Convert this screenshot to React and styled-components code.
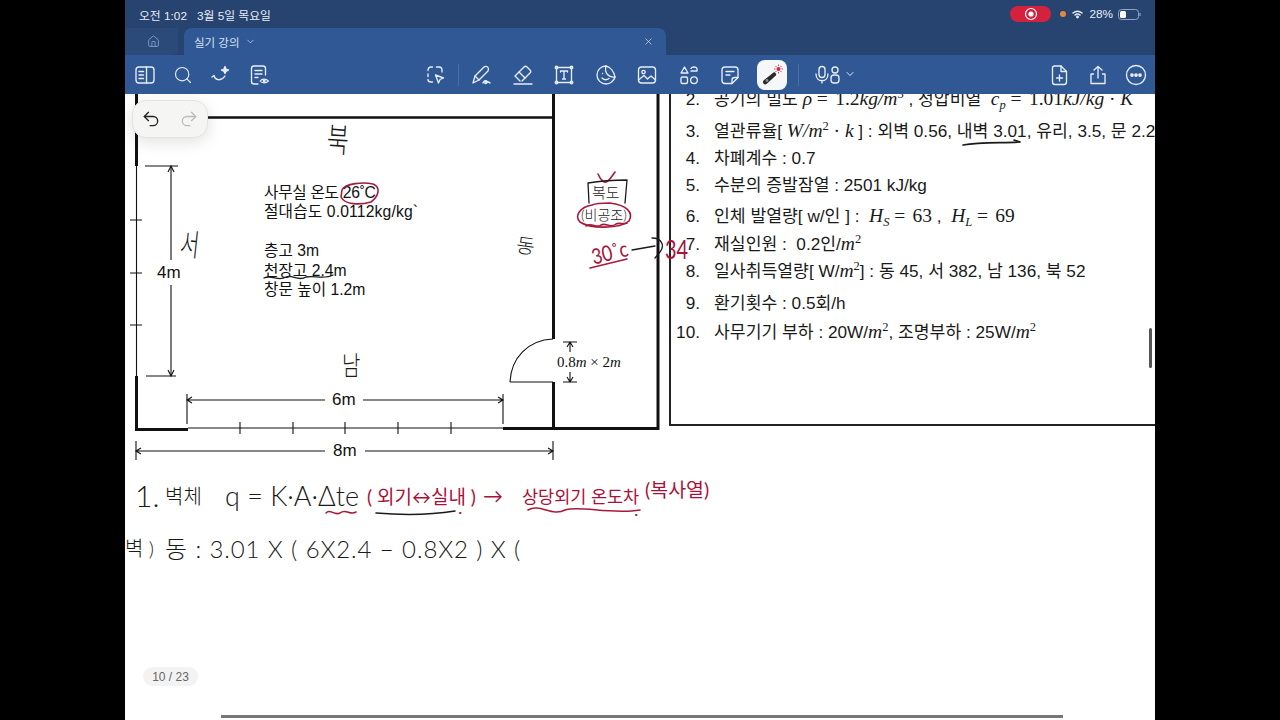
import React from "react";
import styled, { createGlobalStyle } from "styled-components";
import {
  ChevronDown,
  Home,
  Redo2,
  Search,
  Undo2,
  X,
} from "lucide-react";

const GlobalStyle = createGlobalStyle`
  html, body { margin: 0; padding: 0; background: #000; }
  body {
    font-family: "Liberation Sans", "Noto Sans CJK KR", sans-serif;
    color: #111;
  }
`;

// the recording is letterboxed: 125px black on both sides
const Stage = styled.div`
  width: 1280px;
  height: 720px;
  background: #000;
  display: flex;
  justify-content: center;
  overflow: hidden;
`;

const Screen = styled.div`
  width: 1030px;
  height: 720px;
  display: flex;
  flex-direction: column;
  position: relative;
  overflow: hidden;
  background: #fff;
`;

const StatusBar = styled.div`
  height: 28px;
  background: #27436f;
  color: #e8edf5;
  font-size: 11.8px;
  display: flex;
  align-items: center;
  justify-content: space-between;
  padding: 0 14px;
  box-sizing: border-box;
`;

const StatusLeft = styled.div`
  display: flex;
  gap: 10px;
`;

const StatusRight = styled.div`
  display: flex;
  align-items: center;
  gap: 5px;
`;

const RecordPill = styled.div`
  width: 41px;
  height: 16px;
  border-radius: 8px;
  background: #d4213d;
  display: flex;
  align-items: center;
  justify-content: center;
  margin-right: 4px;
`;

const OrangeDot = styled.span`
  width: 6px;
  height: 6px;
  border-radius: 50%;
  background: #e8873a;
`;

const TabBar = styled.div`
  height: 27px;
  background: #27436f;
  display: flex;
`;

const HomeTab = styled.div`
  width: 53px;
  height: 27px;
  background: #2b4a7a;
  border-bottom-right-radius: 6px;
  display: flex;
  align-items: center;
  justify-content: center;
  color: #8fa6c8;
  padding-left: 4px;
  box-sizing: border-box;
`;

const ActiveTab = styled.div`
  width: 482px;
  margin-left: 6px;
  background: #2f5895;
  border-radius: 8px 8px 0 0;
  display: flex;
  align-items: center;
  justify-content: space-between;
  padding: 0 12px 0 10px;
  box-sizing: border-box;
  color: #d5e0f0;
  font-size: 11.5px;
`;

const TabTitle = styled.div`
  display: flex;
  align-items: center;
  gap: 5px;
`;

const Toolbar = styled.div`
  height: 39px;
  background: #2f5895;
  color: #e6edf7;
  display: grid;
  grid-template-columns: 1fr auto 1fr;
  align-items: center;
  padding: 0 7px 0 8px;
  box-sizing: border-box;
`;

const ToolGroup = styled.div`
  display: flex;
  align-items: center;
  gap: ${(p) => p.$gap || 14}px;
  justify-content: ${(p) => p.$end ? "flex-end" : "flex-start"};
`;

const ToolIcon = styled.div`
  width: ${(p) => p.$w || 24}px;
  height: 30px;
  display: flex;
  align-items: center;
  justify-content: ${(p) => (p.$start ? "flex-start" : "center")};
  border-radius: 8px;
  background: ${(p) => (p.$active ? "#f6f7f9" : "transparent")};
  margin: ${(p) => (p.$active ? "0 -3px" : "0")};
`;

const ToolDivider = styled.div`
  width: 1px;
  height: 22px;
  background: #4a6fa6;
  margin: 0 -${(p) => p.$pull}px;
`;

const Page = styled.div`
  flex: 1;
  position: relative;
  overflow: hidden;
  background: #fff;
`;

const Sheet = styled.div`
  display: flex;
  height: 337px;
`;

const PlanFigure = styled.div`
  width: 544px;
  height: 337px;
  flex: none;
  position: relative;
`;

const PlanDrawing = styled.svg`
  display: block;
  width: 544px;
  height: 337px;
  overflow: visible;
`;

// labels on the floor plan, placed in screen coordinates
const PlanLabel = styled.span`
  position: absolute;
  left: ${(p) => p.$x - 125}px;
  top: ${(p) => p.$y - 94}px;
  font-size: ${(p) => p.$size || 15.7}px;
  line-height: 1;
  white-space: nowrap;
  font-family: ${(p) => p.$serif ? '"Liberation Serif", serif' : 'inherit'};
  letter-spacing: ${(p) => p.$track || 0}px;
`;

const ConditionPanel = styled.div`
  flex: 1;
  height: 332px;
  border-left: 2px solid #222;
  border-bottom: 2px solid #222;
  overflow: hidden;
  box-sizing: border-box;
  margin-right: -2px;
`;

const ConditionList = styled.ol`
  list-style: none;
  margin: -5px 0 0;
  padding: 0;
`;

const ConditionRow = styled.li`
  display: flex;
  height: 20px;
  line-height: 20px;
  font-size: 17.2px;
  white-space: nowrap;
  color: #1a1a1a;
  margin-top: ${(p) => p.$top || 0}px;
`;

const RowNumber = styled.span`
  width: 29px;
  text-align: right;
  flex: none;
  margin-right: 14px;
`;

const RowText = styled.span`
  display: block;
`;

const Math = styled.span`
  font-family: "Liberation Serif", serif;
  font-style: ${(p) => (p.$plain ? "normal" : "italic")};
  font-size: 19.5px;
  word-spacing: 2.5px;
`;

const Sup = styled.sup`
  font-size: 12.5px;
  line-height: 0;
  font-family: "Liberation Serif", serif;
`;

const Sub = styled.sub`
  font-size: 12.5px;
  line-height: 0;
  font-family: "Liberation Serif", serif;
  font-style: italic;
`;

const HandRow = styled.div`
  display: flex;
  align-items: center;
  height: 40px;
  margin-top: ${(p) => p.$top}px;
  padding-left: ${(p) => p.$left || 0}px;
`;

const Hand = styled.span`
  flex: 0 0 ${(p) => p.$w}px;
  white-space: nowrap;
  font-family: "Lato", "Noto Sans CJK KR", sans-serif;
  font-weight: ${(p) => (p.$red ? 400 : 300)};
  font-size: ${(p) => p.$size || 27}px;
  letter-spacing: ${(p) => p.$track || 0}px;
  color: ${(p) => (p.$red ? "#a8123a" : "#1a1a1a")};
  margin-bottom: ${(p) => p.$lift || 0}px;
`;

// handwriting scribbled over the plan
const Scribble = styled.span`
  position: absolute;
  left: ${(p) => p.$x - 125}px;
  top: ${(p) => p.$y - 94}px;
  font-family: "Lato", "Noto Sans CJK KR", sans-serif;
  font-weight: ${(p) => (p.$red ? 400 : 300)};
  font-size: ${(p) => p.$size || 24}px;
  line-height: 1;
  white-space: nowrap;
  color: ${(p) => (p.$red ? "#a8123a" : "#1a1a1a")};
  transform: rotate(${(p) => p.$turn || 0}deg) scaleY(${(p) => p.$tall || 1});
  transform-origin: top left;
`;

const InkLayer = styled.svg`
  position: absolute;
  left: 0;
  top: 0;
  width: 1030px;
  height: 626px;
  pointer-events: none;
`;

const UndoPill = styled.div`
  position: absolute;
  left: 7px;
  top: 6px;
  width: 76px;
  height: 38px;
  border-radius: 14px;
  background: #f5f5f3;
  border: 1px solid #e4e4e0;
  box-sizing: border-box;
  box-shadow: 0 4px 16px rgba(0, 0, 0, 0.12);
  display: flex;
  align-items: center;
  justify-content: center;
  gap: 18px;
  color: #222;
`;

const RedoIcon = styled.span`
  display: flex;
  color: #bdbdb8;
`;

const PageBadge = styled.div`
  position: absolute;
  left: 18px;
  top: 573px;
  width: 55px;
  height: 19px;
  border-radius: 10px;
  background: #f3f3f3;
  color: #666;
  font-size: 12px;
  display: flex;
  align-items: center;
  justify-content: center;
`;

const ScrollThumbY = styled.div`
  position: absolute;
  right: 3px;
  top: 234px;
  width: 3px;
  height: 40px;
  border-radius: 2px;
  background: #555;
`;

const ScrollThumbX = styled.div`
  position: absolute;
  left: 96px;
  bottom: 2px;
  width: 842px;
  height: 3px;
  background: #777;
`;

const stroke = {
  fill: "none",
  stroke: "currentColor",
  strokeWidth: 1.35,
  strokeLinecap: "round",
  strokeLinejoin: "round",
};

const Glyph = ({ w = 22, children }) => (
  <svg width={w} height="22" viewBox="0 0 22 22" {...stroke}>
    {children}
  </svg>
);

const PLAN_RED = "#a81a3c";

function FloorPlan() {
  return (
    <PlanDrawing viewBox="125 94 544 337">
      <g stroke="#111" fill="none">
        <g strokeWidth="3">
          <path d="M136.5 94V166M136.5 376V429.5H188" />
          <path d="M136 117.5H553" strokeWidth="2.6" />
          <path d="M553.5 94V339M553.5 382V428" />
          <path d="M503 428.5H658V94" />
        </g>
        <g strokeWidth="1.1">
          <path d="M136.5 166V376" />
          <path d="M130 220H142M130 273H142M130 325H142" />
          <path d="M188 428H503" />
          <path d="M240 422V434M293 422V434M345 422V434M398 422V434M451 422V434" />
          <path d="M145 166H178M146 376H176M171 166V260M171 285V376" />
          <path d="M168 172L171 166L174 172M168 370L171 376L174 370" />
          <path d="M187 394V424M503 394V424" />
          <path d="M187 400H325M363 400H503M192 397L187 400L192 403M498 397L503 400L498 403" />
          <path d="M136 441V460M553 441V460" />
          <path d="M136 451H325M365 451H553M141 448L136 451L141 454M548 448L553 451L548 454" />
          <path d="M510 382H553M510 382C511 358 528 340 553 339" />
          <path d="M563 342H577M563 382H577M570 342V352M570 372V382M567 347L570 342L573 347M567 377L570 382L573 377" />
        </g>
      </g>
    </PlanDrawing>
  );
}

function Ink() {
  return (
    <InkLayer viewBox="125 94 1030 626">
      <g fill="none" strokeLinecap="round" strokeLinejoin="round">
        <g stroke={PLAN_RED} strokeWidth="1.6">
          <path d="M342 190C345 183 364 182 373 184C381 187 379 196 371 202C360 205 345 205 341 197Z" />
          <path d="M598 174C601 181 605 184 608 181C611 178 613 175 615 172" />
          <path d="M592 205C580 207 574 216 580 222C590 229 620 229 629 221C634 212 626 205 610 203C600 203 594 204 592 205Z" />
          <path d="M586 226C592 222 596 229 601 225C606 222 610 229 616 224C620 222 623 225 627 223" />
          <path d="M590 268L627 259" />
          <path d="M326 513C330 508 334 516 340 513C346 508 350 516 356 512" />
          <path d="M528 510C540 503 552 517 565 510C580 505 610 515 640 510" />
          <path d="M460 513H460.5M636 515H636.5" strokeWidth="2" />
        </g>
        <g stroke="#1a1a1a" strokeWidth="1.3">
          <path d="M264 278C272 274 278 282 286 277C292 274 298 282 306 277C314 275 324 280 333 275" />
          <path d="M963 145C980 142 1000 143 1019 142" strokeWidth="1.7" />
          <path d="M1014 140L1020 142" strokeWidth="1.7" />
          <path d="M588 183C600 181 615 180 627 180L625 203M588 183L589 203" />
          <path d="M632 250L655 246M652 238C662 238 665 246 660 252L655 258" />
          <path d="M376 513C400 515 430 515 455 511" strokeWidth="1.5" />
        </g>
      </g>
    </InkLayer>
  );
}

export default function App() {
  return (
    <Stage>
      <GlobalStyle />
      <Screen>
        <StatusBar>
          <StatusLeft>
            <span>오전 1:02</span>
            <span>3월 5일 목요일</span>
          </StatusLeft>
          <StatusRight>
            <RecordPill>
              <svg width="14" height="14" viewBox="0 0 14 14">
                <circle cx="7" cy="7" r="5.5" fill="none" stroke="#fff" strokeWidth="1.2" />
                <circle cx="7" cy="7" r="2.6" fill="#fff" />
              </svg>
            </RecordPill>
            <OrangeDot />
            <svg width="13" height="10" viewBox="0 0 13 10" fill="none" stroke="#e8edf5" strokeWidth="1.5" strokeLinecap="round">
              <path d="M2 4C5 1.6 8 1.6 11 4M4 6C5.6 4.8 7.4 4.8 9 6" />
              <circle cx="6.5" cy="8" r="0.7" fill="#e8edf5" />
            </svg>
            <span>28%</span>
            <svg width="23" height="11" viewBox="0 0 23 11">
              <rect x="0.5" y="0.5" width="20" height="10" rx="3" fill="none" stroke="#8fa3c2" />
              <rect x="2" y="2" width="6" height="7" rx="1.5" fill="#fff" />
              <path d="M22 4V7" stroke="#8fa3c2" strokeWidth="1.2" />
            </svg>
          </StatusRight>
        </StatusBar>

        <TabBar>
          <HomeTab>
            <Home size={13} strokeWidth={1.5} />
          </HomeTab>
          <ActiveTab>
            <TabTitle>
              실기 강의
              <ChevronDown size={11} strokeWidth={1.5} />
            </TabTitle>
            <X size={11} strokeWidth={1.5} />
          </ActiveTab>
        </TabBar>

        <Toolbar>
          <ToolGroup $gap={14}>
            <ToolIcon>
              <Glyph>
                <rect x="2" y="3" width="18" height="16" rx="3" />
                <path d="M12.5 3V19M5 7.5H9.5M5 11H9.5M5 14.5H9.5" />
              </Glyph>
            </ToolIcon>
            <ToolIcon><Search size={20} strokeWidth={1.4} /></ToolIcon>
            <ToolIcon>
              <Glyph>
                <path d="M2 13L4 11.5C5 16 11 18 15 12" />
                <path d="M15 2.5C15.4 5 16 5.6 18.5 6C16 6.4 15.4 7 15 9.5C14.6 7 14 6.4 11.5 6C14 5.6 14.6 5 15 2.5Z" fill="currentColor" />
              </Glyph>
            </ToolIcon>
            <ToolIcon>
              <Glyph>
                <path d="M10 20H6C4.5 20 3.5 19 3.5 17.5V4.5C3.5 3 4.5 2 6 2H15C16.5 2 17.5 3 17.5 4.5V11" />
                <path d="M7 6.5H14M7 10H14M7 13.5H10" />
                <path d="M12 17C14 14.5 18 14.5 20.5 17C18 19.5 14 19.5 12 17Z" strokeWidth="1.1" />
                <circle cx="16.2" cy="17" r="0.9" fill="currentColor" />
              </Glyph>
            </ToolIcon>
          </ToolGroup>

          <ToolGroup $gap={17.5}>
            <ToolIcon>
              <Glyph>
                <path d="M4 6.5C4 4.5 5 3 7 3H8.5M12.5 3H15C17 3 18 4.5 18 6.5V8M4 10V12.5M4 15.5C4 17 5 18 7 18H8.5" />
                <path d="M11.5 11L19.5 14L16 15.5L14.5 19Z" />
              </Glyph>
            </ToolIcon>
            <ToolDivider $pull={7} />
            <ToolIcon>
              <Glyph>
                <path d="M3 19L5 12L14 3C15 2 17 2 18 3.5C19 5 18.5 6 18 7L9 16Z" />
                <path d="M5 12L9 16M13 19C14 16 17 16 17 18C17 20 14 20 15 18C16 17 19 18 20 19" />
              </Glyph>
            </ToolIcon>
            <ToolIcon>
              <Glyph>
                <path d="M8 17L3 12L12 3C13 2 14 2 15 3L18 6C19 7 19 8 18 9L10 17" />
                <path d="M7 8L13 14M2 20H20" />
              </Glyph>
            </ToolIcon>
            <ToolIcon>
              <Glyph>
                <path d="M4 3.5H18M4 18.5H18M3.5 4V18M18.5 4V18" />
                <circle cx="3.5" cy="3.5" r="1.3" /><circle cx="18.5" cy="3.5" r="1.3" />
                <circle cx="3.5" cy="18.5" r="1.3" /><circle cx="18.5" cy="18.5" r="1.3" />
                <path d="M7.5 8V7H14.5V8M11 7V15M9.5 15H12.5" />
              </Glyph>
            </ToolIcon>
            <ToolIcon>
              <Glyph>
                <path d="M11 2C6 2 2 6 2 11C2 16 6 20 11 20C15 20 19 17 20 13C14 14 9 9 11 2Z" />
                <path d="M11 2C15 3 19 7 20 13" />
                <path d="M7 14C9 16 12 16 14 14.5M7.5 9.5H7.6" />
              </Glyph>
            </ToolIcon>
            <ToolIcon>
              <Glyph>
                <rect x="2.5" y="3" width="17" height="16" rx="3" />
                <circle cx="7.5" cy="8" r="1.7" />
                <path d="M2.5 16L8 11.5L11.5 15L15 12L19.5 16" />
              </Glyph>
            </ToolIcon>
            <ToolIcon>
              <Glyph>
                <path d="M6.5 3L10 9H3Z" />
                <rect x="3" y="13" width="6.5" height="6.5" rx="1.5" />
                <circle cx="16" cy="16.2" r="3.3" />
                <path d="M13 4.5C14 2.5 18 2.5 19 4.5L19 7M13 7H19" />
              </Glyph>
            </ToolIcon>
            <ToolIcon>
              <Glyph>
                <path d="M13 19.5H6C4 19.5 3 18.5 3 16.5V6C3 4 4 3 6 3H16C18 3 19 4 19 6V13.5Z" />
                <path d="M13 19.5V16C13 14.5 14 13.5 15.5 13.5H19M7 7.5H15M7 11H11" />
              </Glyph>
            </ToolIcon>
            <ToolIcon $active $w={30}>
              <svg width="24" height="24" viewBox="0 0 24 24">
                <path d="M3.5 17.5L13.5 9.5C15 8.5 17 11 15.8 12.5L6.5 21C4.5 22.5 1.8 19.5 3.5 17.5Z" fill="#2b2b2b" />
                <circle cx="7" cy="17.5" r="1.4" fill="#8a8a8a" />
                <circle cx="18.5" cy="6" r="2" fill="#d8263c" />
                <path d="M18.5 1.5V3M18.5 9V10.5M14 6H15.5M21.5 6H23M15.5 3L16.5 4M20.5 8L21.5 9M15.5 9L16.5 8M20.5 4L21.5 3" stroke="#d8263c" strokeWidth="0.9" />
              </svg>
            </ToolIcon>
            <ToolDivider $pull={3} />
            <ToolIcon $w={44} $start>
              <svg width="40" height="22" viewBox="0 0 40 22" {...stroke}>
                <rect x="5" y="2.5" width="6" height="11" rx="3" />
                <path d="M2 10C2 19 14 19 14 10M8 16.5V19" />
                <circle cx="21" cy="6" r="3" />
                <rect x="17" y="11" width="8" height="8" rx="3" />
                <path d="M33 8.5L36 11.5L39 8.5" strokeWidth="1" />
              </svg>
            </ToolIcon>
          </ToolGroup>

          <ToolGroup $gap={14} $end>
            <ToolIcon>
              <Glyph>
                <path d="M5.5 2H12L17.5 7.5V18C17.5 19.5 16.5 20.5 15 20.5H6C4.5 20.5 3.5 19.5 3.5 18V4C3.5 3 4.5 2 5.5 2Z" />
                <path d="M12 2V7.5H17.5M10.5 11V17M7.5 14H13.5" />
              </Glyph>
            </ToolIcon>
            <ToolIcon>
              <Glyph>
                <path d="M11 14V2.5M7 6L11 2.5L15 6M6.5 10H4V19.5H18V10H15.5" />
              </Glyph>
            </ToolIcon>
            <ToolIcon>
              <Glyph>
                <circle cx="11" cy="11" r="9.5" />
                <circle cx="7" cy="11" r="1.2" fill="currentColor" />
                <circle cx="11" cy="11" r="1.2" fill="currentColor" />
                <circle cx="15" cy="11" r="1.2" fill="currentColor" />
              </Glyph>
            </ToolIcon>
          </ToolGroup>
        </Toolbar>

        <Page>
          <Sheet>
            <PlanFigure>
              <FloorPlan />
              <PlanLabel $x={264} $y={185} $track={-0.3}>사무실 온도 26˚C</PlanLabel>
              <PlanLabel $x={264} $y={204} $track={0.15}>절대습도 0.0112kg/kg`</PlanLabel>
              <PlanLabel $x={264} $y={243}>층고 3m</PlanLabel>
              <PlanLabel $x={264} $y={263}>천장고 2.4m</PlanLabel>
              <PlanLabel $x={264} $y={282}>창문 높이 1.2m</PlanLabel>
              <PlanLabel $x={157} $y={264} $size={17}>4m</PlanLabel>
              <PlanLabel $x={332} $y={391} $size={17}>6m</PlanLabel>
              <PlanLabel $x={333} $y={442} $size={17}>8m</PlanLabel>
              <PlanLabel $x={557} $y={355} $size={15} $serif>
                0.8<i>m</i> × 2<i>m</i>
              </PlanLabel>
            </PlanFigure>

            <ConditionPanel>
              <ConditionList>
                <ConditionRow>
                  <RowNumber>2.</RowNumber>
                  <RowText>
                    공기의 밀도&nbsp;
                    <Math>ρ</Math>&nbsp;<Math $plain>= 1.2</Math><Math>kg/m</Math><Sup>3</Sup>
                    &nbsp;, 정압비열&nbsp;&nbsp;
                    <Math>c</Math><Sub>p</Sub>&nbsp;<Math $plain>= 1.01</Math><Math>kJ/kg</Math>&nbsp;<Math $plain>·</Math>&nbsp;<Math>K</Math>
                  </RowText>
                </ConditionRow>
                <ConditionRow $top={12}>
                  <RowNumber>3.</RowNumber>
                  <RowText>
                    열관류율[&nbsp;<Math>W/m</Math><Sup>2</Sup>&nbsp;<Math $plain>·</Math>&nbsp;<Math>k</Math>&nbsp;] : 외벽 0.56, 내벽 3.01, 유리, 3.5, 문 2.2
                  </RowText>
                </ConditionRow>
                <ConditionRow $top={7}>
                  <RowNumber>4.</RowNumber>
                  <RowText>차폐계수 : 0.7</RowText>
                </ConditionRow>
                <ConditionRow $top={7}>
                  <RowNumber>5.</RowNumber>
                  <RowText>수분의 증발잠열 : 2501 kJ/kg</RowText>
                </ConditionRow>
                <ConditionRow $top={11}>
                  <RowNumber>6.</RowNumber>
                  <RowText>
                    인체 발열량[ w/인 ] :&nbsp;&nbsp;
                    <Math>H</Math><Sub>S</Sub>&nbsp;<Math $plain>= 63</Math>&nbsp;,&nbsp;&nbsp;
                    <Math>H</Math><Sub>L</Sub>&nbsp;<Math $plain>= 69</Math>
                  </RowText>
                </ConditionRow>
                <ConditionRow $top={8}>
                  <RowNumber>7.</RowNumber>
                  <RowText>재실인원 :&nbsp;&nbsp;0.2인/<Math>m</Math><Sup>2</Sup></RowText>
                </ConditionRow>
                <ConditionRow $top={7}>
                  <RowNumber>8.</RowNumber>
                  <RowText>일사취득열량[ W/<Math>m</Math><Sup>2</Sup>] : 동 45, 서 382, 남 136, 북 52</RowText>
                </ConditionRow>
                <ConditionRow $top={12}>
                  <RowNumber>9.</RowNumber>
                  <RowText>환기횟수 : 0.5회/h</RowText>
                </ConditionRow>
                <ConditionRow $top={9}>
                  <RowNumber>10.</RowNumber>
                  <RowText>사무기기 부하 : 20W/<Math>m</Math><Sup>2</Sup>, 조명부하 : 25W/<Math>m</Math><Sup>2</Sup></RowText>
                </ConditionRow>
              </ConditionList>
            </ConditionPanel>
          </Sheet>

          <HandRow $top={44} $left={10}>
            <Hand $w={30} $size={30}>1.</Hand>
            <Hand $w={60} $size={20}>벽체</Hand>
            <Hand $w={142} $size={27}>q = K·A·Δte</Hand>
            <Hand $w={116} $size={19} $red>( 외기↔실내 )</Hand>
            <Hand $w={39} $size={20} $red>→</Hand>
            <Hand $w={123} $size={17.5} $red>상당외기 온도차</Hand>
            <Hand $w={70} $size={19.5} $red $lift={14}>(복사열)</Hand>
          </HandRow>
          <HandRow $top={12}>
            <Hand $w={40} $size={20}>벽 )</Hand>
            <Hand $w={355} $size={24} $track={0.9}>동 : 3.01 X ( 6X2.4 − 0.8X2 ) X (</Hand>
          </HandRow>

          <Scribble $x={328} $y={122} $size={24} $turn={4} $tall={1.4}>북</Scribble>
          <Scribble $x={182} $y={227} $size={21} $turn={6} $tall={1.45}>서</Scribble>
          <Scribble $x={518} $y={234} $size={20} $turn={8}>동</Scribble>
          <Scribble $x={342} $y={352} $size={20} $tall={1.3}>남</Scribble>
          <Scribble $x={592} $y={185} $size={15}>복도</Scribble>
          <Scribble $x={581} $y={208} $size={14}>(비공조)</Scribble>
          <Scribble $x={589} $y={246} $size={18} $red $turn={-14} $tall={1.2}>30˚c</Scribble>
          <Scribble $x={665} $y={236} $size={20} $red $tall={1.3}>34</Scribble>
          <Ink />

          <UndoPill>
            <Undo2 size={20} strokeWidth={1.6} />
            <RedoIcon><Redo2 size={20} strokeWidth={1.6} /></RedoIcon>
          </UndoPill>
          <PageBadge>10 / 23</PageBadge>
          <ScrollThumbY />
          <ScrollThumbX />
        </Page>
      </Screen>
    </Stage>
  );
}
